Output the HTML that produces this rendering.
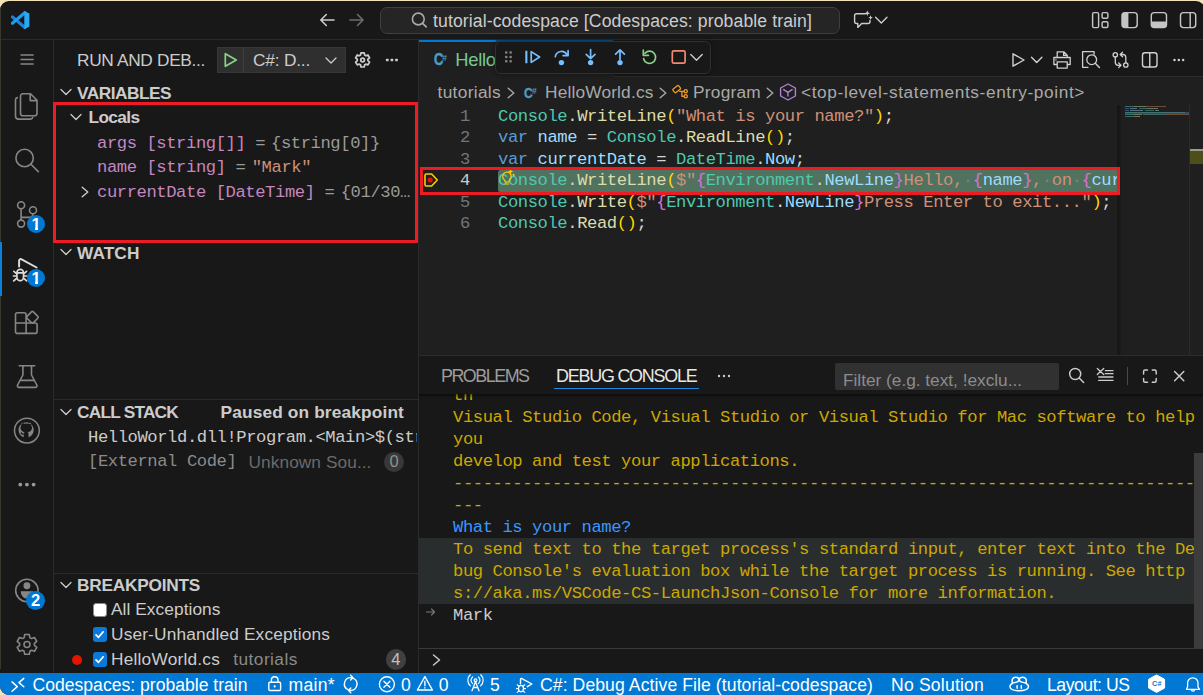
<!DOCTYPE html><html lang="en"><head><meta charset="utf-8"><title>tutorial-codespace [Codespaces: probable train] - Visual Studio Code</title><style>
html,body{margin:0;padding:0;}
body{width:1203px;height:695px;overflow:hidden;background:#f3e3b6;font-family:"Liberation Sans",sans-serif;}
#win{position:absolute;left:0;top:1px;width:1204.5px;height:694px;background:#181818;border-radius:9px 9px 3px 9px;overflow:hidden;}
#pg{position:absolute;left:0;top:-1px;width:1203px;height:695px;}
#pg>*{position:absolute;}
#pg>div{box-sizing:border-box;}
.t{white-space:pre;display:block;}
.s{font-family:"Liberation Sans",sans-serif;}
.m{font-family:"Liberation Mono",monospace;}
svg{overflow:visible;}
.k{fill:none;stroke:#ccc;stroke-width:1.1;stroke-linecap:round;stroke-linejoin:round;}
.a{fill:none;stroke:#868686;stroke-width:1.1;stroke-linecap:round;stroke-linejoin:round;}

</style></head><body><div id="win"><div id="pg">
<div style="left:0px;top:39px;width:1203px;height:1px;background:#2b2b2b;"></div>
<div style="left:53px;top:40px;width:1px;height:633px;background:#2b2b2b;"></div>
<div style="left:418px;top:40px;width:1px;height:633px;background:#2b2b2b;"></div>
<div style="left:419px;top:40px;width:785px;height:315px;background:#1f1f1f;"></div>
<div style="left:419px;top:40px;width:785px;height:37px;background:#181818;"></div>
<div style="left:614px;top:76px;width:589px;height:1px;background:#2b2b2b;"></div>
<div style="left:419px;top:355px;width:785px;height:1px;background:#2b2b2b;"></div>
<div style="left:0px;top:673px;width:1203px;height:22px;background:#0078d4;"></div>
<svg style="left:0px;top:0px;" width="60" height="40" viewBox="0 0 60 40"><path d="M12.400 16.900 24.800 27.500" stroke="#1a86d9" stroke-width="3.100" stroke-linecap="round"/><path d="M12.400 23.300 24.800 12.700" stroke="#1f9cf0" stroke-width="3.100" stroke-linecap="round"/><path d="M24.300 11 29.400 13.600V26.600L24.300 29.200z" fill="#2aa9f8"/></svg>
<svg style="left:300px;top:0px;" width="160" height="40" viewBox="300 0 160 40"><path d="M334 20H321M326.300 14.500 320.800 20 326.300 25.500" fill="none" stroke="#ccc" stroke-width="1.600" stroke-linecap="round" stroke-linejoin="round"/><path d="M349.800 20H362.800M357.500 14.500 363 20 357.500 25.500" fill="none" stroke="#6c6c6c" stroke-width="1.600" stroke-linecap="round" stroke-linejoin="round"/></svg>
<div style="left:380px;top:7px;width:460px;height:27px;background:#252526;border:1px solid #3f3f3f;border-radius:7px;"></div>
<svg style="left:400px;top:0px;" width="40" height="40" viewBox="400 0 40 40"><circle cx="418.300" cy="19" r="5.900" fill="none" stroke="#aaa" stroke-width="1.600"/><path d="M422.600 23.300 426.200 26.900" stroke="#aaa" stroke-width="1.700" stroke-linecap="round"/></svg>
<span class="t s" style="left:433px;top:10.00px;font-size:17.6px;line-height:23px;color:#ccc;letter-spacing:0.115px;">tutorial-codespace [Codespaces: probable train]</span>
<svg style="left:840px;top:0px;" width="60" height="40" viewBox="840 0 60 40"><path class="k" d="M865.500 13.800H856.600a2 2 0 0 0-2 2V21.500a2 2 0 0 0 2 2h1.200V27.400l3.900-3.900H868a2 2 0 0 0 2-2V20.500" style="stroke-width:1.400"/><path fill="#d0d0d0" d="M867.300 10.400l.85 2 2 .85-2 .85-.85 2-.85-2-2-.85 2-.85zM870.600 15.300l.7 1.600 1.600.700-1.600.700-.7 1.600-.7-1.600-1.600-.700 1.600-.700z"/><path class="k" d="M875.600 17.300 881.300 23 887 17.300" style="stroke-width:1.400"/></svg>
<svg style="left:1083px;top:0px;" width="120" height="40" viewBox="1083 0 120 40"><g fill="none" stroke="#c5c5c5" stroke-width="1.450"><rect x="1092.600" y="12.600" width="6" height="15" rx="1.300"/><rect x="1102.100" y="12.600" width="5.800" height="5.600" rx="1.300"/><rect x="1102.100" y="21.800" width="5.800" height="5.800" rx="1.300"/><rect x="1122" y="12.600" width="15.200" height="15" rx="3"/><rect x="1151.300" y="12.600" width="15.200" height="15" rx="3"/><rect x="1180.500" y="12.600" width="15.200" height="15" rx="3"/><path d="M1190.200 12.600v15"/></g><path fill="#c5c5c5" d="M1125 12.600h3.400v15H1125a3 3 0 0 1-3-3v-9a3 3 0 0 1 3-3zM1151.300 21.400h15.200v3.200a3 3 0 0 1-3 3h-9.200a3 3 0 0 1-3-3z"/></svg>
<div style="left:0px;top:9px;width:1px;height:660px;background:#3a372f;"></div>
<div style="left:0px;top:241.5px;width:2px;height:54.5px;background:#0a7fdc;"></div>
<svg style="left:0px;top:0px;" width="54" height="695" viewBox="0 0 54 695">
<g fill="none" stroke="#868686" stroke-width="1.600" stroke-linecap="round" stroke-linejoin="round">
<path d="M20.500 55H33.700M20.500 59.500H33.700M20.500 64H33.700" stroke-width="1.500" stroke-linecap="butt"/>
<path d="M22.800 93.800h7.700l6.500 6.500v13.200a2.300 2.300 0 0 1-2.300 2.300h-11.900a2.300 2.300 0 0 1-2.300-2.300v-17.400a2.300 2.300 0 0 1 2.300-2.300zM30.200 94.200v6.400h6.400M17.300 97.600a2.300 2.300 0 0 0-1.800 2.300v16a3.200 3.200 0 0 0 3.200 3.200h11.800a2.300 2.300 0 0 0 2.200-1.600"/>
<circle cx="24.600" cy="158" r="8.700"/><path d="M30.900 164.300 38.300 171.600"/>
<circle cx="21.100" cy="205.300" r="3.500"/><circle cx="21.100" cy="223.600" r="3.500"/><circle cx="33" cy="210.200" r="3.500"/>
<path d="M21.100 208.800V220.100M33 213.700c0 3.700-2.500 3.700-5.500 3.700H21.100"/>
<path d="M15.500 314.700a2 2 0 0 1 2-2h6.600a2 2 0 0 1 2 2v8.300h9a2 2 0 0 1 2 2v6.400a2 2 0 0 1-2 2H17.500a2 2 0 0 1-2-2zM15.500 323H26.100V333.400"/>
<rect x="-4.500" y="-4.500" width="9" height="9" rx="1.400" transform="translate(32.400 317.300) rotate(45)"/>
<path d="M19.200 365.700H34.700M22.900 365.700V375L17.600 385a1.600 1.600 0 0 0 1.400 2.400H35.400a1.600 1.600 0 0 0 1.400-2.400L31.500 375V365.700M20.400 380.400H34"/>
<circle cx="26.900" cy="430.600" r="12.400" stroke-width="1.500"/>
<circle cx="26.900" cy="590.500" r="11.200"/>
<g transform="translate(15.480 633.100) scale(0.960)"><path d="M9.600 1.500h4.800l.600 3.200 1.700 1 3.100-1.100 2.400 4.100-2.500 2.100v2l2.500 2.100-2.400 4.100-3.100-1.100-1.700 1-.600 3.200H9.600l-.600-3.200-1.700-1-3.100 1.100-2.400-4.100 2.500-2.100v-2L1.800 8.700l2.400-4.100 3.100 1.100 1.700-1z" stroke-width="1.650"/><circle cx="12" cy="11.900" r="3.100" stroke-width="1.650"/></g>
</g>
<path fill="#868686" transform="translate(11.540 415.240) scale(1.280)" d="M12 5.500c-3.800 0-6.500 2.600-6.500 6 0 2.700 1.700 4.800 4 5.700v-2.100c-1.700.400-2.200-.800-2.600-1.500l1-.300c.600 1 1.100 1.100 1.700.900.100-.500.400-.900.700-1.100-2-.300-3.300-1.200-3.300-3.400 0-.800.300-1.500.800-2-.100-.500-.200-1.200.100-1.900.900 0 1.500.400 2 .800a6.500 6.500 0 0 1 3.200 0c.500-.400 1.100-.800 2-.800.300.700.200 1.400.100 1.900.500.500.800 1.200.800 2 0 2.200-1.300 3.100-3.300 3.400.400.400.600.900.600 1.600v2.500c2.300-.900 4-3 4-5.700 0-3.400-2.700-6-6.300-6z"/>
<circle fill="#999" cx="20.300" cy="484.600" r="1.900"/><circle fill="#999" cx="26.900" cy="484.600" r="1.900"/><circle fill="#999" cx="33.600" cy="484.600" r="1.900"/>
<circle fill="#868686" cx="26.900" cy="585.700" r="3.450"/><path fill="#868686" d="M20.700 591.200H33.100a6.200 7.400 0 0 1-12.400 0z"/>
<g fill="none" stroke="#dcdcdc" stroke-width="1.700" stroke-linecap="round" stroke-linejoin="round">
<path d="M19.100 266.500V260.800a1.600 1.600 0 0 1 2.500-1.400L36.600 267.500" stroke-width="1.950"/>
<path d="M16.900 272.700a3.300 3.300 0 0 1 6.600 0V277a3.300 3.700 0 0 1-6.600 0zM17 272.900H23.400" stroke-width="1.650"/>
<path d="M16.500 273.700 13.800 271.300M16.300 276H13.400M16.500 278.500 13.700 280.900M23.900 273.700 26.600 271.300M24.100 276H27M23.900 278.500 26.700 280.900" stroke-width="1.650"/>
</g>
</svg>
<div style="left:27px;top:215px;width:18px;height:18px;background:#0078d4;border-radius:50%;"></div>
<span class="t s" style="left:31.4px;top:215.00px;font-size:16.5px;line-height:19px;color:#fff;font-weight:700;">1</span>
<div style="left:27px;top:269px;width:18px;height:18px;background:#0078d4;border-radius:50%;"></div>
<span class="t s" style="left:31.4px;top:269.00px;font-size:16.5px;line-height:19px;color:#fff;font-weight:700;">1</span>
<div style="left:26.0px;top:590.5px;width:19.0px;height:19.0px;background:#0078d4;border-radius:50%;"></div>
<span class="t s" style="left:30.9px;top:591.00px;font-size:16.5px;line-height:19px;color:#fff;font-weight:700;">2</span>
<div style="left:32.4px;top:227.5px;width:2.8px;height:3px;background:#0078d4;"></div>
<div style="left:38px;top:227.5px;width:3.2px;height:3px;background:#0078d4;"></div>
<div style="left:32.4px;top:281.5px;width:2.8px;height:3px;background:#0078d4;"></div>
<div style="left:38px;top:281.5px;width:3.2px;height:3px;background:#0078d4;"></div>
<span class="t s" style="left:77px;top:49.00px;font-size:17.3px;line-height:22px;color:#ccc;letter-spacing:-0.323px;">RUN AND DEB...</span>
<div style="left:217px;top:47px;width:129px;height:26px;background:#2f2f2f;border:1px solid #383838;"></div>
<div style="left:242.5px;top:48px;width:1px;height:24px;background:#3e3e3e;"></div>
<svg style="left:222px;top:51px;" width="18" height="18" viewBox="0 0 18 18"><path d="M3.300 2.700 14.300 9 3.300 15.300z" fill="none" stroke="#89d185" stroke-width="1.700" stroke-linejoin="round"/></svg>
<span class="t s" style="left:253px;top:49.00px;font-size:17.3px;line-height:22px;color:#ccc;letter-spacing:-0.197px;">C#: D...</span>
<svg style="left:324px;top:53px;" width="14" height="14" viewBox="0 0 14 14"><path class="k" d="M2 5 7 10 12 5" style="stroke-width:1.300"/></svg>
<svg style="left:340px;top:44px;" width="80" height="32" viewBox="340 44 80 32"><g transform="translate(354.370 51.840) scale(0.686)" fill="none" stroke="#ccc" stroke-linejoin="round"><path d="M9.600 1.500h4.800l.600 3.200 1.700 1 3.100-1.100 2.400 4.100-2.500 2.100v2l2.500 2.100-2.400 4.100-3.100-1.100-1.700 1-.600 3.200H9.600l-.600-3.200-1.700-1-3.100 1.100-2.400-4.100 2.500-2.100v-2L1.800 8.700l2.400-4.100 3.100 1.100 1.700-1z" stroke-width="2.500"/><circle cx="12" cy="11.900" r="2.700" stroke-width="2.500"/></g><g fill="#ccc"><rect x="386" y="58.700" width="2.600" height="2.600" rx=".6"/><rect x="390.600" y="58.700" width="2.600" height="2.600" rx=".6"/><rect x="395.200" y="58.700" width="2.600" height="2.600" rx=".6"/></g></svg>
<svg style="left:60px;top:86px;" width="12" height="12" viewBox="0 0 12 12"><path d="M1 3.500 6 8.500 11 3.500" fill="none" stroke="#ccc" stroke-width="1.300" stroke-linecap="round" stroke-linejoin="round"/></svg>
<span class="t s" style="left:77px;top:82.00px;font-size:17.3px;line-height:22px;color:#ccc;font-weight:700;letter-spacing:-0.509px;">VARIABLES</span>
<svg style="left:70px;top:111px;" width="12" height="12" viewBox="0 0 12 12"><path d="M1 3.500 6 8.500 11 3.500" fill="none" stroke="#ccc" stroke-width="1.300" stroke-linecap="round" stroke-linejoin="round"/></svg>
<span class="t s" style="left:88.5px;top:106.00px;font-size:17.3px;line-height:22px;color:#ccc;font-weight:700;letter-spacing:-0.625px;">Locals</span>
<span class="t m" style="left:97px;top:133.00px;font-size:17.2px;line-height:22px;color:#cccccc;letter-spacing:-0.425px;"><span style="color:#c586c0">args [string[]]</span><span style="color:#9a9a9a"> =</span><span style="color:#9a9a9a;margin-left:-4px"> {string[0]}</span></span>
<span class="t m" style="left:97px;top:157.00px;font-size:17.2px;line-height:22px;color:#cccccc;letter-spacing:-0.425px;"><span style="color:#c586c0">name [string]</span><span style="color:#9a9a9a"> =</span><span style="color:#ce9178;margin-left:-3.500px"> "Mark"</span></span>
<svg style="left:78.7px;top:186.3px;" width="12" height="12" viewBox="0 0 12 12"><path d="M3.200 1.300 8.800 6 3.200 10.700" fill="none" stroke="#ccc" stroke-width="1.400" stroke-linecap="round" stroke-linejoin="round"/></svg>
<span class="t m" style="left:97px;top:182.00px;font-size:17.2px;line-height:22px;color:#cccccc;letter-spacing:-0.425px;"><span style="color:#c586c0">currentDate [DateTime]</span><span style="color:#9a9a9a"> =</span><span style="color:#9a9a9a;margin-left:-3.500px"> {01/30…</span></span>
<div style="left:53px;top:102px;width:365.2px;height:141px;border:3.1px solid #ed1c24;"></div>
<svg style="left:60px;top:246px;" width="12" height="12" viewBox="0 0 12 12"><path d="M1 3.500 6 8.500 11 3.500" fill="none" stroke="#ccc" stroke-width="1.300" stroke-linecap="round" stroke-linejoin="round"/></svg>
<span class="t s" style="left:77px;top:242.00px;font-size:17.3px;line-height:22px;color:#ccc;font-weight:700;letter-spacing:0.084px;">WATCH</span>
<div style="left:54px;top:399px;width:364px;height:1px;background:#2b2b2b;"></div>
<svg style="left:60px;top:406px;" width="12" height="12" viewBox="0 0 12 12"><path d="M1 3.500 6 8.500 11 3.500" fill="none" stroke="#ccc" stroke-width="1.300" stroke-linecap="round" stroke-linejoin="round"/></svg>
<span class="t s" style="left:77px;top:401.00px;font-size:17.3px;line-height:22px;color:#ccc;font-weight:700;letter-spacing:-0.781px;">CALL STACK</span>
<span class="t s" style="left:220.5px;top:401.00px;font-size:17.3px;line-height:22px;color:#ccc;font-weight:700;letter-spacing:0.148px;">Paused on breakpoint</span>
<div style="left:88px;top:427.00px;width:329px;height:22px;overflow:hidden;"><span class="m" style="position:absolute;left:0;top:0;white-space:pre;font-size:17.2px;line-height:22px;color:#ccc;letter-spacing:-0.425px;">HelloWorld.dll!Program.&lt;Main&gt;$(string[] args)</span></div>
<span class="t m" style="left:88px;top:451.00px;font-size:17.2px;line-height:22px;color:#8b8b8b;letter-spacing:-0.425px;">[External Code]</span>
<span class="t s" style="left:248.5px;top:451.00px;font-size:17.3px;line-height:22px;color:#6a6a6a;letter-spacing:0.071px;">Unknown Sou...</span>
<div style="left:384.3px;top:451.5px;width:20px;height:20.5px;background:#383838;border-radius:50%;"></div>
<span class="t s" style="left:389.4px;top:451.00px;font-size:16.5px;line-height:20px;color:#8f8f8f;">0</span>
<div style="left:54px;top:573px;width:364px;height:1px;background:#2b2b2b;"></div>
<svg style="left:60px;top:579px;" width="12" height="12" viewBox="0 0 12 12"><path d="M1 3.500 6 8.500 11 3.500" fill="none" stroke="#ccc" stroke-width="1.300" stroke-linecap="round" stroke-linejoin="round"/></svg>
<span class="t s" style="left:77px;top:574.00px;font-size:17.3px;line-height:22px;color:#ccc;font-weight:700;letter-spacing:-0.253px;">BREAKPOINTS</span>
<div style="left:92.5px;top:602.5px;width:14.5px;height:14.5px;background:#fff;border:1px solid #8a8a8a;border-radius:3px;"></div>
<span class="t s" style="left:111px;top:598.00px;font-size:17.3px;line-height:22px;color:#ccc;letter-spacing:0.068px;">All Exceptions</span>
<div style="left:92.5px;top:627px;width:14.5px;height:14.5px;background:#0b79d9;border-radius:3px;"></div>
<svg style="left:93.2px;top:627.7px;" width="13" height="13" viewBox="0 0 13 13"><path d="M3 6.800 5.500 9.300 10.200 3.800" fill="none" stroke="#fff" stroke-width="1.700" stroke-linecap="round" stroke-linejoin="round"/></svg>
<span class="t s" style="left:111px;top:623.00px;font-size:17.3px;line-height:22px;color:#ccc;letter-spacing:0.153px;">User-Unhandled Exceptions</span>
<div style="left:72.3px;top:654.5px;width:10px;height:10px;background:#e51400;border-radius:50%;"></div>
<div style="left:92.5px;top:652px;width:14.5px;height:14.5px;background:#0b79d9;border-radius:3px;"></div>
<svg style="left:93.2px;top:652.7px;" width="13" height="13" viewBox="0 0 13 13"><path d="M3 6.800 5.500 9.300 10.200 3.800" fill="none" stroke="#fff" stroke-width="1.700" stroke-linecap="round" stroke-linejoin="round"/></svg>
<span class="t s" style="left:111px;top:648.00px;font-size:17.3px;line-height:22px;color:#ccc;letter-spacing:0.209px;">HelloWorld.cs</span>
<span class="t s" style="left:233.3px;top:648.00px;font-size:17.3px;line-height:22px;color:#8a8a8a;letter-spacing:0.443px;">tutorials</span>
<div style="left:385.6px;top:649px;width:20.5px;height:20.5px;background:#404040;border-radius:50%;"></div>
<span class="t s" style="left:391.2px;top:649.00px;font-size:16.5px;line-height:20px;color:#c0c0c0;">4</span>
<div style="left:419px;top:40px;width:195px;height:37px;background:#1f1f1f;"></div>
<div style="left:419px;top:40px;width:195px;height:1.5px;background:#0b4f85;"></div>
<div style="left:419px;top:40px;width:77px;height:2px;background:#0078d4;"></div>
<div style="left:613px;top:40px;width:1px;height:37px;background:#262626;"></div>
<span class="t s" style="left:433.6px;top:51.00px;font-size:17px;line-height:18px;color:#4f9bc4;font-weight:700;transform:scaleX(.76);transform-origin:0 0;-webkit-text-stroke:.5px #4f9bc4;">C</span>
<span class="t s" style="left:442px;top:53.00px;font-size:9px;line-height:10px;color:#4f9bc4;font-weight:700;">#</span>
<span class="t s" style="left:455.3px;top:48.00px;font-size:18.4px;line-height:24px;color:#73c991;letter-spacing:-0.278px;">HelloWorld.cs</span>
<div style="left:494.5px;top:41px;width:216px;height:33px;background:#181818;border:1px solid #303030;border-radius:6px;box-shadow:0 0 5px rgba(0,0,0,.45);"></div>
<svg style="left:496px;top:40px;" width="220" height="40" viewBox="496 40 220 40"><g fill="#7f7f7f"><rect x="505" y="51.300" width="2.500" height="2.500" rx=".8"/><rect x="509.400" y="51.300" width="2.500" height="2.500" rx=".8"/><rect x="505" y="55.700" width="2.500" height="2.500" rx=".8"/><rect x="509.400" y="55.700" width="2.500" height="2.500" rx=".8"/><rect x="505" y="60.100" width="2.500" height="2.500" rx=".8"/><rect x="509.400" y="60.100" width="2.500" height="2.500" rx=".8"/></g><g fill="none" stroke="#75beff" stroke-width="1.700" stroke-linecap="round" stroke-linejoin="round"><path d="M526.350 50.800V63.200" stroke-width="2.100" stroke-linecap="butt"/><path d="M531.200 51.600 539.600 57 531.200 62.400z"/><path d="M555.300 56.600A6.300 6.300 0 0 1 567 54.600M568.100 50.600V55.600H563.100"/><path d="M590.600 49.500V58.500M586.200 54.300 590.600 58.700 595 54.300"/><path d="M620 59.300V50M615.600 54.200 620 49.800 624.400 54.200"/></g><g fill="#75beff"><circle cx="561.400" cy="62.600" r="2.700"/><circle cx="590.600" cy="62.600" r="2.700"/><circle cx="620" cy="62.600" r="2.700"/></g><path d="M645 53.200A6.100 6.100 0 1 1 643.600 58.700M643.300 50.200V55.300H648.400" fill="none" stroke="#89d185" stroke-width="1.700" stroke-linecap="round" stroke-linejoin="round"/><rect x="672.300" y="50.900" width="12.800" height="12.300" rx="1.500" fill="none" stroke="#f48771" stroke-width="1.700"/><path d="M690.800 54.600 696.500 60.300 702.200 54.600" fill="none" stroke="#ccc" stroke-width="1.400" stroke-linecap="round" stroke-linejoin="round"/></svg>
<svg style="left:1003px;top:40px;" width="200" height="40" viewBox="1003 40 200 40"><g fill="none" stroke="#d0d0d0" stroke-width="1.400" stroke-linejoin="round" stroke-linecap="round"><path d="M1013 53.800 1024 60 1013 66.200z"/><path d="M1031.500 57.300 1036.700 62.500 1041.900 57.300"/><path d="M1057.200 57.500V51.800h6.600l3.400 3.400v2.300M1057.200 64.500h-3.300v-7h16.300v7h-3M1057.200 61.800h10v6.300h-10zM1063.600 52v3.400h3.400" stroke-width="1.300"/><path d="M1088 67.300H1082.600V51.700H1094.100V54.300" stroke-width="1.300"/><circle cx="1091.700" cy="59.700" r="4.900" stroke-width="1.300"/><path d="M1095.300 63.300 1099.400 67.400"/><circle cx="1115.300" cy="54.800" r="2.200" stroke-width="1.300"/><circle cx="1125.800" cy="65" r="2.200" stroke-width="1.300"/><path d="M1115.300 57v5.300a3 3 0 0 0 3 3h2.600M1118.700 63 1121 65.300l-2.300 2.300M1125.800 62.800V57.500a3 3 0 0 0-3-3h-2.600M1122.500 56.800 1120.200 54.500l2.300-2.300" stroke-width="1.300"/><rect x="1142.500" y="52.700" width="14.500" height="14.300" rx="2.500"/><path d="M1149.750 52.700V67"/></g><g fill="#d0d0d0"><circle cx="1174.500" cy="60" r="1.250"/><circle cx="1178.800" cy="60" r="1.250"/><circle cx="1183.100" cy="60" r="1.250"/></g><rect x="1055.300" y="59.300" width="1.300" height="1.300" fill="#d0d0d0"/></svg>
<span class="t s" style="left:437.5px;top:81.00px;font-size:17.3px;line-height:22px;color:#a9a9a9;letter-spacing:0.332px;">tutorials</span>
<svg style="left:504.8px;top:86.7px;" width="12" height="12" viewBox="0 0 12 12"><path d="M3.200 1.300 8.800 6 3.200 10.700" fill="none" stroke="#a9a9a9" stroke-width="1.400" stroke-linecap="round" stroke-linejoin="round"/></svg>
<span class="t s" style="left:524.3px;top:84.00px;font-size:15.5px;line-height:18px;color:#4f9bc4;font-weight:700;transform:scaleX(.78);transform-origin:0 0;-webkit-text-stroke:.4px #4f9bc4;">C</span>
<span class="t s" style="left:532px;top:86.00px;font-size:8.5px;line-height:10px;color:#4f9bc4;font-weight:700;">#</span>
<span class="t s" style="left:545px;top:81.00px;font-size:17.3px;line-height:22px;color:#a9a9a9;letter-spacing:0.171px;">HelloWorld.cs</span>
<svg style="left:656.5px;top:86.7px;" width="12" height="12" viewBox="0 0 12 12"><path d="M3.200 1.300 8.800 6 3.200 10.700" fill="none" stroke="#a9a9a9" stroke-width="1.400" stroke-linecap="round" stroke-linejoin="round"/></svg>
<svg style="left:660px;top:80px;" width="150" height="26" viewBox="660 80 150 26"><g fill="none" stroke="#ee9d28" stroke-width="1.300" stroke-linejoin="round" stroke-linecap="round"><rect x="-3.600" y="-2.300" width="7.200" height="4.600" rx="1" transform="translate(676.700 89.100) rotate(-38)"/><path d="M679.800 91.400H684M681.900 91.400V96.300H684"/><circle cx="685.700" cy="91.300" r="1.600"/><circle cx="685.700" cy="96.300" r="1.600"/></g><g fill="none" stroke="#b180d7" stroke-width="1.400" stroke-linejoin="round" stroke-linecap="round"><path d="M788 84 795.400 88V96L788 100 780.600 96V88z"/><path d="M783.700 89.600 787.900 92.300 792.100 89.600M787.900 92.300V96"/></g></svg>
<span class="t s" style="left:693px;top:81.00px;font-size:17.3px;line-height:22px;color:#a9a9a9;letter-spacing:0.248px;">Program</span>
<svg style="left:764.2px;top:86.7px;" width="12" height="12" viewBox="0 0 12 12"><path d="M3.200 1.300 8.800 6 3.200 10.700" fill="none" stroke="#a9a9a9" stroke-width="1.400" stroke-linecap="round" stroke-linejoin="round"/></svg>
<span class="t s" style="left:801px;top:81.00px;font-size:17.3px;line-height:22px;color:#a9a9a9;letter-spacing:0.612px;">&lt;top-level-statements-entry-point&gt;</span>
<div style="left:498px;top:170px;width:620px;height:21.5px;background:#51725f;border-radius:2.500px 0 0 2.500px;"></div>
<span class="t m" style="left:460px;top:106.00px;font-size:17.2px;line-height:22px;color:#6e7681;letter-spacing:-0.425px;">1</span>
<div style="left:498px;top:106.00px;width:620px;height:22px;overflow:hidden;"><span class="m" style="position:absolute;left:0;top:0;white-space:pre;font-size:17.2px;line-height:22px;letter-spacing:-0.425px;"><span style="color:#4ec9b0">Console</span><span style="color:#d4d4d4">.</span><span style="color:#dcdcaa">WriteLine</span><span style="color:#ffd700">(</span><span style="color:#ce9178">"What is your name?"</span><span style="color:#ffd700">)</span><span style="color:#d4d4d4">;</span></span></div>
<span class="t m" style="left:460px;top:127.00px;font-size:17.2px;line-height:22px;color:#6e7681;letter-spacing:-0.425px;">2</span>
<div style="left:498px;top:127.00px;width:620px;height:22px;overflow:hidden;"><span class="m" style="position:absolute;left:0;top:0;white-space:pre;font-size:17.2px;line-height:22px;letter-spacing:-0.425px;"><span style="color:#569cd6">var</span><span style="color:#9cdcfe"> name</span><span style="color:#d4d4d4"> = </span><span style="color:#4ec9b0">Console</span><span style="color:#d4d4d4">.</span><span style="color:#dcdcaa">ReadLine</span><span style="color:#ffd700">()</span><span style="color:#d4d4d4">;</span></span></div>
<span class="t m" style="left:460px;top:149.00px;font-size:17.2px;line-height:22px;color:#6e7681;letter-spacing:-0.425px;">3</span>
<div style="left:498px;top:149.00px;width:620px;height:22px;overflow:hidden;"><span class="m" style="position:absolute;left:0;top:0;white-space:pre;font-size:17.2px;line-height:22px;letter-spacing:-0.425px;"><span style="color:#569cd6">var</span><span style="color:#9cdcfe"> currentDate</span><span style="color:#d4d4d4"> = </span><span style="color:#4ec9b0">DateTime</span><span style="color:#d4d4d4">.</span><span style="color:#9cdcfe">Now</span><span style="color:#d4d4d4">;</span></span></div>
<span class="t m" style="left:460px;top:170.00px;font-size:17.2px;line-height:22px;color:#cccccc;letter-spacing:-0.425px;">4</span>
<div style="left:498px;top:170.00px;width:620px;height:22px;overflow:hidden;"><span class="m" style="position:absolute;left:0;top:0;white-space:pre;font-size:17.2px;line-height:22px;letter-spacing:-0.425px;"><span style="color:#4ec9b0">Console</span><span style="color:#d4d4d4">.</span><span style="color:#dcdcaa">WriteLine</span><span style="color:#ffd700">(</span><span style="color:#ce9178">$"</span><span style="color:#da70d6">{</span><span style="color:#4ec9b0">Environment</span><span style="color:#d4d4d4">.</span><span style="color:#9cdcfe">NewLine</span><span style="color:#da70d6">}</span><span style="color:#ce9178">Hello,</span><span style="color:#6f8a7a">·</span><span style="color:#da70d6">{</span><span style="color:#9cdcfe">name</span><span style="color:#da70d6">}</span><span style="color:#ce9178">,</span><span style="color:#6f8a7a">·</span><span style="color:#ce9178">on</span><span style="color:#6f8a7a">·</span><span style="color:#da70d6">{</span><span style="color:#9cdcfe">currentDate</span><span style="color:#da70d6">}</span></span></div>
<span class="t m" style="left:460px;top:192.00px;font-size:17.2px;line-height:22px;color:#6e7681;letter-spacing:-0.425px;">5</span>
<div style="left:498px;top:192.00px;width:620px;height:22px;overflow:hidden;"><span class="m" style="position:absolute;left:0;top:0;white-space:pre;font-size:17.2px;line-height:22px;letter-spacing:-0.425px;"><span style="color:#4ec9b0">Console</span><span style="color:#d4d4d4">.</span><span style="color:#dcdcaa">Write</span><span style="color:#ffd700">(</span><span style="color:#ce9178">$"</span><span style="color:#da70d6">{</span><span style="color:#4ec9b0">Environment</span><span style="color:#d4d4d4">.</span><span style="color:#9cdcfe">NewLine</span><span style="color:#da70d6">}</span><span style="color:#ce9178">Press Enter to exit..."</span><span style="color:#ffd700">)</span><span style="color:#d4d4d4">;</span></span></div>
<span class="t m" style="left:460px;top:213.00px;font-size:17.2px;line-height:22px;color:#6e7681;letter-spacing:-0.425px;">6</span>
<div style="left:498px;top:213.00px;width:620px;height:22px;overflow:hidden;"><span class="m" style="position:absolute;left:0;top:0;white-space:pre;font-size:17.2px;line-height:22px;letter-spacing:-0.425px;"><span style="color:#4ec9b0">Console</span><span style="color:#d4d4d4">.</span><span style="color:#dcdcaa">Read</span><span style="color:#ffd700">()</span><span style="color:#d4d4d4">;</span></span></div>
<svg style="left:418px;top:162px;" width="120" height="36" viewBox="418 162 120 36"><path d="M426.300 174h5.300l5.700 6-5.700 6h-5.300a1.300 1.300 0 0 1-1.300-1.300v-9.400a1.300 1.300 0 0 1 1.300-1.300z" fill="none" stroke="#ffcc00" stroke-width="1.600" stroke-linejoin="round"/><circle cx="430.200" cy="180" r="2.600" fill="#e51400"/><path d="M505.200 184h3.600M504.200 179.700a4.300 4.300 0 1 1 5.600 0c-.7.700-1 1.400-1 2.300h-3.600c0-.9-.3-1.600-1-2.300z" fill="none" stroke="#ffcc00" stroke-width="1.200" stroke-linejoin="round" stroke-linecap="round"/><path d="M510.600 168.700l.8 2 2 .8-2 .8-.8 2-.8-2-2-.8 2-.8zM513.600 173.100l.6 1.300 1.300.6-1.300.6-.6 1.300-.6-1.300-1.300-.6 1.300-.6z" fill="#ffcc00"/></svg>
<div style="left:1117px;top:105px;width:1px;height:250px;background:#161616;"></div>
<div style="left:1118px;top:105px;width:4px;height:250px;background:linear-gradient(90deg,rgba(0,0,0,.35),rgba(0,0,0,0));"></div>
<div style="left:1189px;top:105px;width:1px;height:250px;background:#2b2b2b;"></div>
<div style="left:1190px;top:149px;width:13px;height:15px;background:#4e4e1c;"></div>
<div style="left:1190px;top:149px;width:13px;height:1.5px;background:#9a9a88;"></div>
<div style="left:1125px;top:105px;width:64px;height:14px;opacity:.62;"><div style="position:absolute;left:0;top:1px;width:9px;height:1px;background:#3e9e8d"></div><div style="position:absolute;left:9px;top:1px;width:12px;height:1px;background:#a8a880"></div><div style="position:absolute;left:21px;top:1px;width:20px;height:1px;background:#a06a50"></div><div style="position:absolute;left:0;top:3px;width:4px;height:1px;background:#456f9f"></div><div style="position:absolute;left:5px;top:3px;width:7px;height:1px;background:#7aa6c2"></div><div style="position:absolute;left:14px;top:3px;width:8px;height:1px;background:#3e9e8d"></div><div style="position:absolute;left:22px;top:3px;width:11px;height:1px;background:#a8a880"></div><div style="position:absolute;left:0;top:5px;width:4px;height:1px;background:#456f9f"></div><div style="position:absolute;left:5px;top:5px;width:13px;height:1px;background:#7aa6c2"></div><div style="position:absolute;left:20px;top:5px;width:9px;height:1px;background:#3e9e8d"></div><div style="position:absolute;left:30px;top:5px;width:4px;height:1px;background:#7aa6c2"></div><div style="position:absolute;left:0;top:7px;width:64px;height:2px;background:#2f6aa8"></div><div style="position:absolute;left:0;top:7px;width:60px;height:1px;background:#5fa0a8"></div><div style="position:absolute;left:0;top:9px;width:9px;height:1px;background:#3e9e8d"></div><div style="position:absolute;left:9px;top:9px;width:8px;height:1px;background:#a8a880"></div><div style="position:absolute;left:18px;top:9px;width:22px;height:1px;background:#4f8f8a"></div><div style="position:absolute;left:40px;top:9px;width:24px;height:1px;background:#a06a50"></div><div style="position:absolute;left:0;top:11px;width:9px;height:1px;background:#3e9e8d"></div><div style="position:absolute;left:9px;top:11px;width:6px;height:1px;background:#a8a880"></div></div>
<div style="left:420px;top:167px;width:700px;height:28px;border:3px solid #ed1c24;"></div>
<span class="t s" style="left:441px;top:365.00px;font-size:17.9px;line-height:23px;color:#9d9d9d;letter-spacing:-1.490px;">PROBLEMS</span>
<span class="t s" style="left:556px;top:365.00px;font-size:17.9px;line-height:23px;color:#e7e7e7;letter-spacing:-1.200px;">DEBUG CONSOLE</span>
<div style="left:554px;top:387.5px;width:144.5px;height:1.5px;background:#2188e0;"></div>
<svg style="left:716px;top:373px;" width="16" height="6" viewBox="0 0 16 6"><circle fill="#ccc" cx="3" cy="3" r="1.200"/><circle fill="#ccc" cx="8" cy="3" r="1.200"/><circle fill="#ccc" cx="13" cy="3" r="1.200"/></svg>
<div style="left:835px;top:363px;width:224px;height:27px;background:#313131;border-radius:2px;"></div>
<span class="t s" style="left:843px;top:369.00px;font-size:17.3px;line-height:22px;color:#8c8c8c;letter-spacing:-0.021px;">Filter (e.g. text, !exclu...</span>
<svg style="left:1060px;top:358px;" width="143" height="36" viewBox="1060 358 143 36"><g class="k" style="stroke-width:1.450"><circle cx="1075.200" cy="374" r="5.500"/><path d="M1079.200 378 1083.600 382.400"/><path d="M1097.300 368.500 1103.700 374.500M1103.700 368.500 1097.300 374.500M1105.300 370.600H1113M1105.300 373.700H1113M1098.700 377H1113M1098.700 380.400H1113" style="stroke-width:1.300"/><path d="M1143.600 374V371.500a1.500 1.500 0 0 1 1.500-1.500H1147.500M1152.300 370H1154.700a1.500 1.500 0 0 1 1.500 1.500V374M1156.200 378.400V380.800a1.500 1.500 0 0 1-1.500 1.500H1152.300M1147.500 382.300H1145.100a1.500 1.500 0 0 1-1.500-1.500V378.400"/><path d="M1174.600 371.600 1183.800 380.800M1183.800 371.600 1174.600 380.800"/></g></svg>
<div style="left:1127px;top:367px;width:1px;height:18px;background:#4a4a4a;"></div>
<div style="left:419px;top:538px;width:775px;height:65.5px;background:#2a2d2e;"></div>
<div style="left:418px;top:394px;width:785px;height:253px;overflow:hidden;"><pre class="m" style="position:absolute;left:35px;top:-9.00px;margin:0;font-size:17.2px;line-height:22.030px;color:#cca700;white-space:pre;letter-spacing:-0.425px;">th
Visual Studio Code, Visual Studio or Visual Studio for Mac software to help
you
develop and test your applications.
---------------------------------------------------------------------------
---
<span style="color:#3a96ff">What is your name?</span>
To send text to the target process's standard input, enter text into the De
bug Console's evaluation box while the target process is running. See http
s://aka.ms/VSCode-CS-LaunchJson-Console for more information.
<span style="color:#ccc">Mark</span></pre></div>
<div style="left:419px;top:394px;width:785px;height:4px;background:linear-gradient(180deg,rgba(0,0,0,.5),rgba(0,0,0,0));"></div>
<svg style="left:424.5px;top:607.4px;" width="12" height="10" viewBox="0 0 12 10"><path d="M1.500 5h8M6.500 2 9.500 5l-3 3" fill="none" stroke="#7a7a7a" stroke-width="1.100" stroke-linecap="round" stroke-linejoin="round"/></svg>
<div style="left:1194px;top:453px;width:10px;height:194.5px;background:#3c3c3c;"></div>
<div style="left:419px;top:648px;width:785px;height:1px;background:#3a3a3a;"></div>
<svg style="left:430px;top:653px;" width="14" height="14" viewBox="0 0 14 14"><path d="M3.500 2 9.500 7l-6 5" fill="none" stroke="#ccc" stroke-width="1.500" stroke-linecap="round" stroke-linejoin="round"/></svg>
<svg style="left:0px;top:670px;" width="1203" height="25" viewBox="0 670 1203 25"><g fill="none" stroke="#fff" stroke-width="1.400" stroke-linecap="round" stroke-linejoin="round"><path d="M12 681.900 17.300 686.600 12 691.300M23.800 678.400 19 682.600 23.800 686.800" stroke-width="1.500"/><rect x="268.800" y="682.300" width="11.800" height="8.200" rx="1.200"/><path d="M271.400 682.300V680a3.300 3.300 0 0 1 6.600 0V682.300"/><path d="M351.300 677.700A6.300 6.300 0 0 0 347.700 689.500M350.100 690.300A6.300 6.300 0 0 0 353.700 678.500M350.600 675.300 353 677.700 350.600 680.100M350.800 687.900 348.400 690.300 350.800 692.700"/><circle cx="386.900" cy="684.300" r="7.500"/><path d="M383.900 681.300 389.900 687.300M389.900 681.300 383.900 687.300"/><path d="M424.900 676.700 432.400 690H417.400z"/><path d="M424.900 681.200V685.800M424.900 687.700V688"/><path d="M475.500 681.800 472 690.800M475.500 681.800 479 690.800M473.300 687.500H477.700" stroke-width="1.300"/><circle cx="475.500" cy="680.300" r="1.400" stroke-width="1.200"/><path d="M472.600 683.600A4.200 4.200 0 0 1 472.600 677M478.400 677A4.200 4.200 0 0 1 478.400 683.600M470.300 685.800A7.400 7.400 0 0 1 470.300 674.800M480.700 674.800A7.400 7.400 0 0 1 480.700 685.800" stroke-width="1.200"/><path d="M520.500 683.800V679.400a.9.900 0 0 1 1.400-.800L531.900 684 527.300 686.700" stroke-width="1.400"/><ellipse cx="521" cy="688.600" rx="2.500" ry="3.200" stroke-width="1.200"/><path d="M519 686.200 517.200 684.800M523 686.200 524.800 684.800M518.500 688.600H516.500M523.500 688.600H525.500M519 691 517.200 692.400M523 691 524.800 692.400" stroke-width="1.100"/><path d="M1012.500 683.200C1011.400 679.800 1012.800 677.300 1015.700 677.300S1019.200 679 1019.200 680.500C1019.200 679 1019.800 677.300 1022.700 677.300S1027 679.800 1025.900 683.200C1027.600 684 1028.500 685 1028.500 686.500 1028.500 689 1024.500 690.700 1019.200 690.700S1009.900 689 1009.900 686.500C1009.900 685 1010.800 684 1012.500 683.200z" stroke-width="1.500"/><path d="M1012.500 683.200C1014.500 682.500 1017.500 682.500 1019.200 680.500 1020.900 682.500 1023.900 682.500 1025.900 683.200" stroke-width="1.300"/><path d="M1017.100 685.700V688.200M1021.300 685.700V688.200" stroke-width="1.500"/><path d="M1186.500 689.300H1199.500L1198 686.800V683a5.200 5.200 0 0 0-10.400 0V686.800zM1191.400 689.500a1.600 1.600 0 0 0 3.200 0" stroke-width="1.300"/></g><circle cx="274.700" cy="686.400" r="1.100" fill="#fff"/><path d="M1156.600 674.900 1164.600 679.300V688L1156.600 692.400 1148.600 688V679.300z" fill="#fff" stroke="#fff" stroke-width="1" stroke-linejoin="round"/></svg>
<span class="t s" style="left:32.5px;top:674.00px;font-size:17.6px;line-height:23px;color:#fff;letter-spacing:-0.007px;">Codespaces: probable train</span>
<span class="t s" style="left:288.5px;top:674.00px;font-size:17.6px;line-height:23px;color:#fff;letter-spacing:0.303px;">main*</span>
<span class="t s" style="left:401px;top:674.00px;font-size:17.6px;line-height:23px;color:#fff;letter-spacing:0.203px;">0</span>
<span class="t s" style="left:438.8px;top:674.00px;font-size:17.6px;line-height:23px;color:#fff;letter-spacing:0.203px;">0</span>
<span class="t s" style="left:490px;top:674.00px;font-size:17.6px;line-height:23px;color:#fff;letter-spacing:0.203px;">5</span>
<span class="t s" style="left:540px;top:674.00px;font-size:17.6px;line-height:23px;color:#fff;letter-spacing:0.082px;">C#: Debug Active File (tutorial-codespace)</span>
<span class="t s" style="left:891px;top:674.00px;font-size:17.6px;line-height:23px;color:#fff;letter-spacing:0.185px;">No Solution</span>
<span class="t s" style="left:1047px;top:674.00px;font-size:17.6px;line-height:23px;color:#fff;letter-spacing:-0.455px;">Layout: US</span>
<span class="t s" style="left:1152px;top:679.00px;font-size:7.2px;line-height:9px;color:#0078d4;font-weight:700;letter-spacing:0.298px;">C#</span>
</div></div></body></html>
